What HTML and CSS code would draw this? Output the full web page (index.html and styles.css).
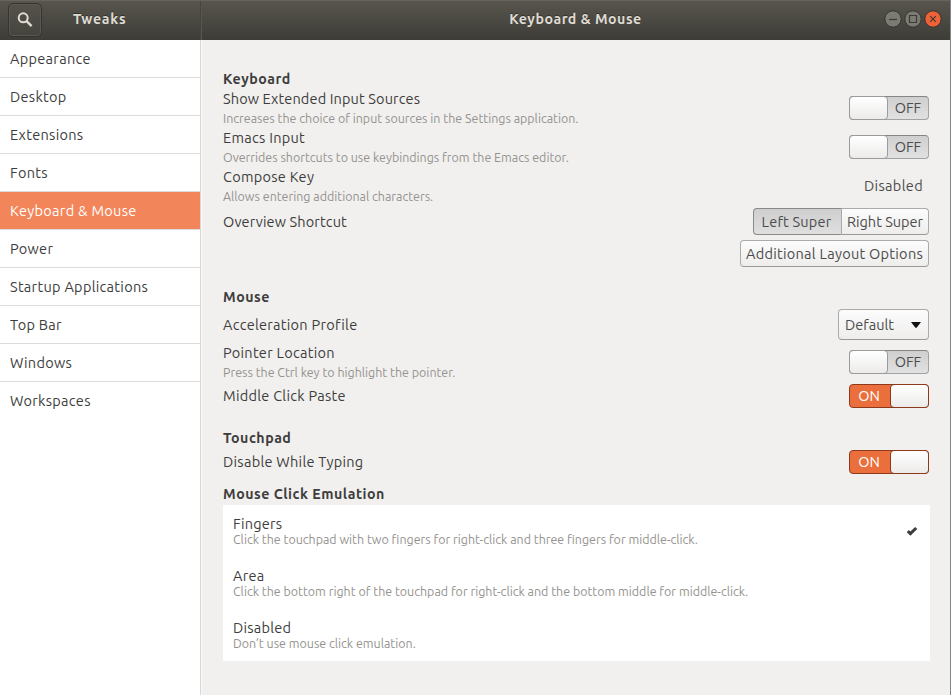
FILE: index.html
```html
<!DOCTYPE html>
<html lang="en">
<head>
<meta charset="utf-8">
<title>Tweaks</title>
<link rel="stylesheet" href="styles.css">
</head>
<body>
<div class="window">
  <header class="titlebar">
    <div class="titlebar-side">
      <button class="search" aria-label="Search"><svg width="16" height="16" viewBox="0 0 16 16"><circle cx="6.2" cy="5.8" r="4.5" fill="none" stroke="#dfdbd2" stroke-width="2"/><path d="M9.3 8.9L14.6 14.2" stroke="#dfdbd2" stroke-width="2.4"/></svg></button>
      <h1 class="title title-app">Tweaks</h1>
    </div>
    <div class="titlebar-main">
      <h1 class="title">Keyboard &amp; Mouse</h1>
      <div class="controls">
        <svg width="18" height="18" viewBox="0 0 18 18"><circle cx="9" cy="9" r="8.2" class="ctl"/><path d="M5 9.5h8" class="ctl-mark"/></svg>
        <svg width="18" height="18" viewBox="0 0 18 18"><circle cx="9" cy="9" r="8.2" class="ctl"/><path d="M5.5 5.5h7v7h-7z" class="ctl-mark"/></svg>
        <svg width="18" height="18" viewBox="0 0 18 18"><circle cx="9" cy="9" r="8.2" class="ctl ctl-close"/><path d="M6.2 6.2l5.6 5.6M11.8 6.2l-5.6 5.6" class="ctl-mark"/></svg>
      </div>
    </div>
  </header>
  <div class="body">
    <nav class="sidebar">
      <a class="item">Appearance</a>
      <a class="item">Desktop</a>
      <a class="item">Extensions</a>
      <a class="item">Fonts</a>
      <a class="item selected">Keyboard &amp; Mouse</a>
      <a class="item">Power</a>
      <a class="item">Startup Applications</a>
      <a class="item">Top Bar</a>
      <a class="item">Windows</a>
      <a class="item last">Workspaces</a>
    </nav>
    <main class="content">
      <section class="group keyboard">
        <h2 class="heading">Keyboard</h2>
        <div class="row"><div><p class="label snug">Show Extended Input Sources</p><p class="desc">Increases the choice of input sources in the Settings application.</p></div><div class="switch"><i class="knob"></i><span class="state">OFF</span></div></div>
        <div class="row"><div><p class="label">Emacs Input</p><p class="desc">Overrides shortcuts to use keybindings from the Emacs editor.</p></div><div class="switch"><i class="knob"></i><span class="state">OFF</span></div></div>
        <div class="row"><div><p class="label">Compose Key</p><p class="desc">Allows entering additional characters.</p></div><span class="value">Disabled</span></div>
        <div class="row row-button"><p class="label snug">Overview Shortcut</p><div class="segmented"><button class="button left pressed">Left Super</button><button class="button right">Right Super</button></div></div>
        <div class="row row-button end"><button class="button wide">Additional Layout Options</button></div>
      </section>
      <section class="group mouse">
        <h2 class="heading">Mouse</h2>
        <div class="row row-combo"><p class="label">Acceleration Profile</p><button class="button combo">Default<svg width="10" height="6" viewBox="0 0 10 6"><path d="M0 0h10L5.8 5.4Q5 6.2 4.2 5.4z" fill="#111"/></svg></button></div>
        <div class="row"><div><p class="label">Pointer Location</p><p class="desc">Press the Ctrl key to highlight the pointer.</p></div><div class="switch"><i class="knob"></i><span class="state">OFF</span></div></div>
        <div class="row row-single"><p class="label">Middle Click Paste</p><div class="switch on"><span class="state">ON</span><i class="knob"></i></div></div>
      </section>
      <section class="group touchpad">
        <h2 class="heading">Touchpad</h2>
        <div class="row row-single"><p class="label">Disable While Typing</p><div class="switch on"><span class="state">ON</span><i class="knob"></i></div></div>
      </section>
      <section class="group emulation">
        <h2 class="heading">Mouse Click Emulation</h2>
        <ul class="options">
          <li class="option"><div><p class="option-title">Fingers</p><p class="option-desc">Click the touchpad with two fingers for right-click and three fingers for middle-click.</p></div><svg class="check" width="12" height="10" viewBox="0 0 12 10"><path d="M1.8 5.2L4.4 7.6L10.2 2" fill="none" stroke="#3b3c3e" stroke-width="3"/></svg></li>
          <li class="option"><div><p class="option-title">Area</p><p class="option-desc">Click the bottom right of the touchpad for right-click and the bottom middle for middle-click.</p></div></li>
          <li class="option"><div><p class="option-title">Disabled</p><p class="option-desc">Don’t use mouse click emulation.</p></div></li>
        </ul>
      </section>
    </main>
  </div>
</div>
</body>
</html>
```
FILE: styles.css
```css
* { box-sizing: border-box; }
body { margin: 0; font-family: Ubuntu, "Noto Sans", sans-serif; font-size: 14.5px; color: #3d3d3d; }
h1, h2, p, ul { margin: 0; padding: 0; }
button { font: inherit; padding: 0; }
.window { width: 951px; height: 695px; display: flex; flex-direction: column; background: #f1f0ee; border-right: 1px solid #85868a; overflow: hidden; }
.titlebar { height: 40px; display: flex; background: linear-gradient(#57554d, #3d3c37); border-top: 1px solid #66645b; margin-right: -1px; flex: none; }
.titlebar-side { width: 201px; display: flex; align-items: center; border-right: 1px solid #45443e; }
.titlebar-main { flex: 1; display: flex; align-items: center; border-left: 1px solid #57554e; }
.search { width: 34px; height: 34px; margin: -2px 0 0 8px; border: 1px solid #35342f; border-radius: 5px; background: linear-gradient(#54524b, #45443e); display: grid; place-items: center; box-shadow: inset 0 0 0 1px #5a5850; }
.title { font-size: 14.2px; font-weight: 700; color: #dfdbd2; line-height: 20px; letter-spacing: .5px; text-shadow: 0 -1px #33322e; margin-top: -3px; }
.title-app { margin-left: 31px; letter-spacing: .75px; }
.titlebar-main .title { flex: 1; padding-left: 65px; text-align: center; }
.controls { display: flex; gap: 2px; padding-right: 9px; margin-top: -3px; }
.ctl { fill: #7b7a73; stroke: #35342f; stroke-width: 1; }
.ctl-close { fill: #ef6237; }
.ctl-mark { fill: none; stroke: #3b3a35; stroke-width: 1.2; }
.body { flex: 1; display: flex; min-height: 0; }
.sidebar { width: 201px; background: #fff; border-right: 1px solid #d9d7d5; display: flex; flex-direction: column; flex: none; }
.item { height: 38px; line-height: 37px; padding-left: 10px; border-bottom: 1px solid #dcdcdc; letter-spacing: .3px; }
.item.last { border-bottom: 0; }
.item.selected { background: #f28559; color: #fff; }
.content { flex: 1; padding: 29px 21px 0; border-left: 1px solid #f9f8f7; }
.heading { font-size: 14.2px; font-weight: 700; line-height: 20px; height: 20px; letter-spacing: .5px; }
.row { height: 39px; display: flex; justify-content: space-between; align-items: flex-start; padding-right: 1px; }
.label { line-height: 20px; letter-spacing: .28px; }
.label.snug { letter-spacing: .14px; }
.desc { font-size: 12.45px; line-height: 18px; color: #959390; }
.row .switch { margin-top: 7px; }
.row-button { height: 32px; }
.row-button .label { margin-top: 6px; }
.row-button .button { margin-top: 2px; }
.row-combo { height: 36px; }
.row-combo .label { margin-top: 8px; }
.row-combo .button { margin-top: 2px; }
.row-single { height: 28px; }
.row-single .label { margin-top: 4px; }
.row-single .switch { margin-top: 2px; }
.end { justify-content: flex-end; }
.mouse { margin-top: 17px; }
.touchpad { margin-top: 18px; }
.emulation { margin-top: 8px; }
.value { margin: 9px 6px 0 0; line-height: 20px; color: #4c4c4c; letter-spacing: .35px; }
.switch { width: 80px; height: 24px; border: 1px solid #a2a2a2; border-top-color: #858585; border-radius: 4px; background: linear-gradient(#cfcfcf, #e1e1e1); display: flex; align-items: center; color: #4c4c4c; }
.knob { width: 39px; height: 24px; margin: -1px; border: 1px solid #9b9b9b; border-radius: 4px; background: linear-gradient(#fff, #ecebea); flex: none; }
.state { flex: 1; text-align: center; line-height: 22px; }
.switch:not(.on) .state { padding-left: 1px; }
.switch.on { background: #eb6f3d; border-color: #8d3a1c; color: #fff; }
.switch.on .state { padding-right: 3px; }
.switch.on .knob { border-color: #8d3a1c; }
.button { height: 27px; border: 1px solid #ababab; border-bottom-color: #999; border-radius: 4px; background: linear-gradient(#fcfcfc, #eeedec); color: #4c4c4c; line-height: 25px; text-align: center; white-space: nowrap; }
.segmented { display: flex; }
.left { width: 88px; border-radius: 4px 0 0 4px; border-right-width: 0; padding-right: 2px; letter-spacing: .2px; }
.right { width: 88px; border-radius: 0 4px 4px 0; }
.pressed { background: linear-gradient(#cecece, #dfdfdf); border-color: #898989; }
.wide { width: 189px; letter-spacing: .28px; }
.combo { width: 91px; height: 31px; display: flex; align-items: center; justify-content: space-between; padding: 0 7px 0 6px; }
.options { list-style: none; background: #fff; width: 707px; margin-top: 1px; }
.option { height: 52px; padding: 10px 12px 0 10px; display: flex; justify-content: space-between; }
.option-title { line-height: 17px; letter-spacing: .25px; }
.option-desc { font-size: 12.45px; line-height: 14px; color: #959390; }
.check { margin-top: 11px; }
```
